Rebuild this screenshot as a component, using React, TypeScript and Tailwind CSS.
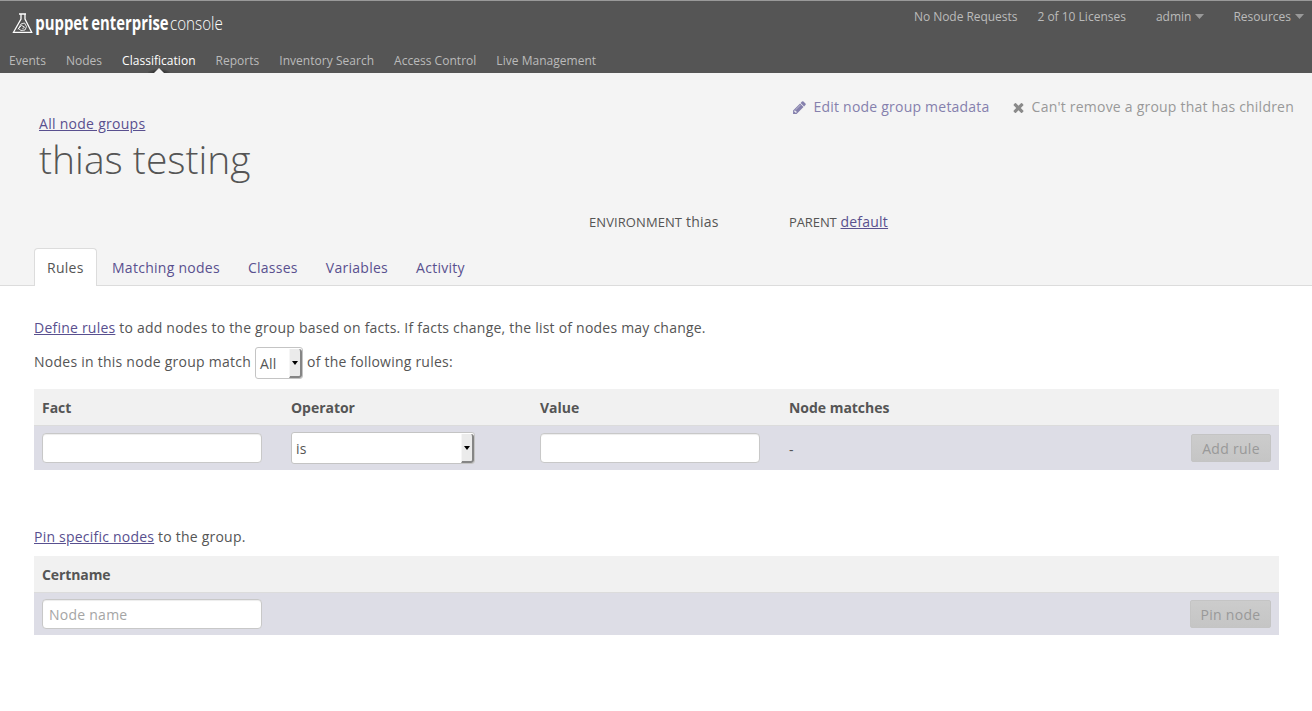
import type { ReactNode } from "react";

const navItems = ["Events", "Nodes", "Classification", "Reports", "Inventory Search", "Access Control", "Live Management"];
const tabs = ["Rules", "Matching nodes", "Classes", "Variables", "Activity"];

function Logo() {
  return (
    <svg width="216" height="30" viewBox="0 0 216 30" className="block" fill="#fff">
      <g fill="none" stroke="#fff">
        <path d="M8 5h7M10 5v5L2.500 23.300h18.200L14 10V5" strokeWidth="1.3" />
        <path d="M7 20.500l3-5.500 3.500-1 2 3.500-1.500 3.500-4 .5-2.500-2 3-3 3 1.500-2 2" strokeWidth="1" strokeOpacity="0.85" />
      </g>
      <g fontFamily="Open Sans, sans-serif" fontSize="19">
        <text transform="translate(24.200 20.500) scale(.785 1)" fontWeight="700">puppet</text>
        <text transform="translate(80.300 20.500) scale(.782 1)" fontWeight="700">enterprise</text>
        <text transform="translate(159 20.500) scale(.8 1)" fontWeight="300">console</text>
      </g>
    </svg>
  );
}

function Caret() {
  return (
    <svg width="9" height="5" viewBox="0 0 9 5" className="mb-px">
      <path d="M0 0h9L4.500 5z" fill="#999" />
    </svg>
  );
}

function PencilIcon() {
  return (
    <svg width="15" height="15" viewBox="0 0 1792 1792" fill="currentColor" className="mr-[6px]">
      <path d="M491 1536l91-91-235-235-91 91v107h128v128h107zm523-928q0-22-22-22-10 0-17 7l-542 542q-7 7-7 17 0 22 22 22 10 0 17-7l542-542q7-7 7-17zm-54-192l416 416-832 832h-416v-416zm683 96q0 53-37 90l-166 166-416-416 166-165q36-38 90-38 53 0 91 38l235 234q37 39 37 91z" />
    </svg>
  );
}

function TimesIcon() {
  return (
    <svg width="15" height="15" viewBox="0 0 1792 1792" fill="#8a8a8a" className="mr-[6px]">
      <path d="M1490 1322q0 40-28 68l-136 136q-28 28-68 28t-68-28l-294-294-294 294q-28 28-68 28t-68-28l-136-136q-28-28-28-68t28-68l294-294-294-294q-28-28-28-68t28-68l136-136q28-28 68-28t68 28l294 294 294-294q28-28 68-28t68 28l136 136q28 28 28 68t-28 68l-294 294 294 294q28 28 28 68z" />
    </svg>
  );
}

function SelectBox({ label, className }: { label: string; className: string }) {
  return (
    <div className={`flex h-8 items-stretch justify-between rounded-[3px] border border-[#c4c4c4] bg-white ${className}`}>
      <span className="pt-[6px] pl-1 leading-5">{label}</span>
      <span className="mt-px flex w-[13px] items-center justify-center rounded-r-[3px] border-r-2 border-b-2 border-l border-r-[#858585] border-b-[#858585] border-l-[#f6f6f6] bg-[#ebebeb]">
        <svg width="6" height="4" viewBox="0 0 6 4">
          <path d="M0 0h6L3 4z" fill="#000" />
        </svg>
      </span>
    </div>
  );
}

function TextField({ placeholder, label }: { placeholder?: string; label: string }) {
  return (
    <input
      aria-label={label}
      placeholder={placeholder}
      className="block h-[30px] w-[220px] rounded-[4px] border border-[#c8c8c8] bg-white px-[6px] pt-[2px] tracking-[0.25px] shadow-[inset_0_1px_1px_rgba(0,0,0,0.075)] placeholder:text-[#a5a5a5]"
    />
  );
}

function DisabledButton({ children, className }: { children: ReactNode; className: string }) {
  return (
    <button disabled className={`h-7 rounded-[2px] border border-[#c4c4c4] bg-linear-to-b from-[#cccccc] to-[#c5c5c5] pt-[2px] text-center leading-5 tracking-[0.28px] text-[#999] ${className}`}>
      {children}
    </button>
  );
}

function Link({ children }: { children: ReactNode }) {
  return <a href="#" className="text-[#59508f] underline">{children}</a>;
}

export default function App() {
  return (
    <div className="h-[711px] overflow-hidden bg-white font-['Open_Sans',sans-serif] text-[14px] leading-5 tracking-[0.22px] text-[#555]">
      <header className="flex h-[73px] flex-col border-t border-[#999] bg-[#555] text-[12px] tracking-normal text-[#bbb]">
        <div className="flex h-[47px] items-start justify-between pt-[8px] pr-2 pl-[11px]">
          <Logo />
          <div className="-mt-[2px] flex leading-5">
            <span className="mr-5 tracking-[-0.04px]">No Node Requests</span>
            <span className="mr-[30px]">2 of 10 Licenses</span>
            <span className="mr-[29px] flex items-center gap-1 leading-5">admin<Caret /></span>
            <span className="flex items-center gap-1">Resources<Caret /></span>
          </div>
        </div>
        <nav className="flex h-[25px] gap-5 pt-[3px] pl-[9px] leading-5 tracking-[0.025px]">
          {navItems.map((item) => (
            <span key={item} className={item === "Classification" ? "relative text-white" : ""}>
              {item}
              {item === "Classification" && (
                <svg width="22" height="8" viewBox="0 0 22 8" className="absolute top-[14px] left-[26px]">
                  <defs>
                    <radialGradient id="notchShade" cx="50%" cy="100%" r="55%">
                      <stop offset="0.35" stopColor="#222" stopOpacity="0.7" />
                      <stop offset="1" stopColor="#222" stopOpacity="0" />
                    </radialGradient>
                  </defs>
                  <path d="M0 0h22v8H0z" fill="url(#notchShade)" />
                  <path d="M6 8l5-5 5 5z" fill="#f4f4f4" />
                </svg>
              )}
            </span>
          ))}
        </nav>
      </header>

      <section className="flex h-[213px] flex-col border-b border-[#dcdcdc] bg-[#f4f4f4]">
        <div className="flex h-[139px] shrink-0 justify-between pr-[18px] pl-[39px]">
          <div className="pt-[41px]">
            <span className="tracking-[0.28px]"><Link>All node groups</Link></span>
            <h1 className="pt-px text-[39px] leading-[48px] font-light tracking-normal">thias testing</h1>
          </div>
          <div className="flex gap-[21px] pt-6">
            <span className="flex h-5 items-center text-[#8580ad]">
              <PencilIcon />Edit node group metadata
            </span>
            <span className="flex h-5 items-center text-[#999]">
              <TimesIcon />Can't remove a group that has children
            </span>
          </div>
        </div>
        <div className="flex h-9 shrink-0 pl-[589px]">
          <div className="w-[200px]"><span className="text-[13px] tracking-[0.08px]">ENVIRONMENT</span> thias</div>
          <div><span className="text-[13px] tracking-[-0.1px]">PARENT</span> <Link>default</Link></div>
        </div>
        <div className="flex h-[38px] shrink-0 gap-[2px] pl-[34px] tracking-[0.27px]">
          {tabs.map((tab, index) => (
            <a
              key={tab}
              href="#"
              className={index === 0
                ? "h-[38px] w-[63px] rounded-t-[4px] border border-b-0 border-[#dcdcdc] bg-white px-3 pt-[9px]"
                : "px-[13px] pt-[10px] text-[#59508f]"}
            >
              {tab}
            </a>
          ))}
        </div>
      </section>

      <main className="pr-[33px] pl-[34px]">
        <p className="pt-8"><Link>Define rules</Link> to add nodes to the group based on facts. If facts change, the list of nodes may change.</p>
        <div className="mt-[9px] flex h-8 gap-1">
          <span className="w-[217px] pt-[5px] tracking-[0.25px] whitespace-nowrap">Nodes in this node group match</span>
          <SelectBox label="All" className="w-12" />
          <span className="pt-[5px]">of the following rules:</span>
        </div>

        <div className="mt-[10px]">
          <div className="grid h-9 grid-cols-[249px_249px_249px_1fr] items-center bg-[#f1f1f1] px-2 pt-[2px] font-bold tracking-[-0.03px]">
            <span>Fact</span><span>Operator</span><span>Value</span><span>Node matches</span>
          </div>
          <div className="grid h-[45px] grid-cols-[249px_249px_249px_1fr_auto] items-center border-t border-[#dcdcdc] bg-[#dddde6] px-2">
            <TextField label="Fact" />
            <SelectBox label="is" className="w-[184px]" />
            <TextField label="Value" />
            <span className="pt-[3px]">-</span>
            <DisabledButton className="w-20">Add rule</DisabledButton>
          </div>
        </div>

        <p className="mt-[57px]"><Link>Pin specific nodes</Link> to the group.</p>
        <div className="mt-[9px]">
          <div className="flex h-9 items-center bg-[#f1f1f1] px-2 pt-[2px] font-bold tracking-[-0.1px]">Certname</div>
          <div className="flex h-[43px] items-center justify-between border-t border-[#dcdcdc] bg-[#dddde6] px-2 pb-px">
            <TextField label="Certname" placeholder="Node name" />
            <DisabledButton className="w-[81px]">Pin node</DisabledButton>
          </div>
        </div>
      </main>
    </div>
  );
}
